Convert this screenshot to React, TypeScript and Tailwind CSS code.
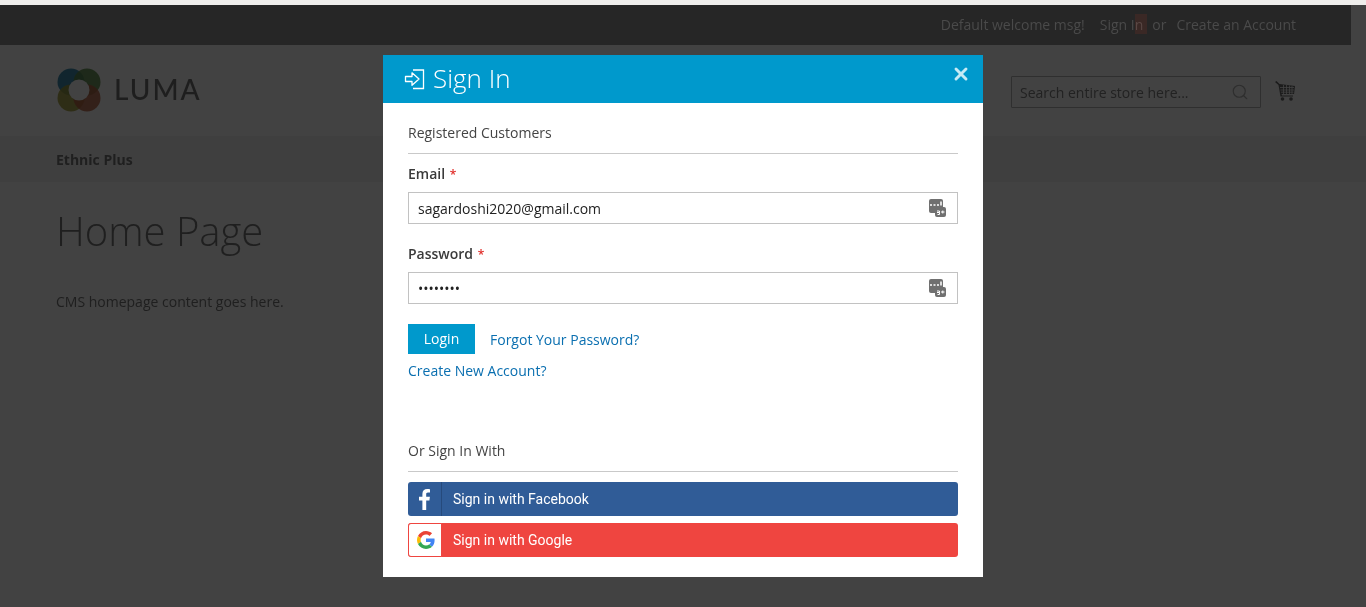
import { Search, X } from "lucide-react";

const LumaLogo = () => (
  <svg width="44" height="44" viewBox="0 0 44 44" className="ml-[1px] mr-[13px]">
    <g fillOpacity="0.85" style={{ mixBlendMode: "multiply" }}>
      <circle cx="14" cy="14" r="13.5" fill="#1f7ba3" />
      <circle cx="30" cy="14" r="13.5" fill="#5c8c46" />
      <circle cx="14" cy="30" r="13.5" fill="#a39d36" />
      <circle cx="30" cy="30" r="13.5" fill="#b86242" />
    </g>
    <circle cx="22" cy="22" r="10.5" fill="#424242" />
  </svg>
);

const CartIcon = () => (
  <svg width="20" height="20" viewBox="0 0 20 20" fill="#1c1c1c" className="mb-[2px]">
    <path d="M0 1 L1.500 0 L4.500 3 L20 5 L19 13 L6.500 13 L7 14.500 L18 14.500 L18 15.500 L5.500 15.500 L3.500 4 Z" />
    <g stroke="#424242" strokeWidth="0.8">
      <path d="M5 6.500 H19 M5.500 9 H19 M6 11.200 H18.500 M8.500 4 V13 M11.500 4 V13 M14.500 4.500 V13 M17 5 V13" />
    </g>
    <circle cx="7.500" cy="18" r="1.800" />
    <circle cx="16" cy="18" r="1.800" />
  </svg>
);

const SignInIcon = () => (
  <svg width="22" height="22" viewBox="0 0 22 22" fill="none" stroke="#ffffff" strokeWidth="1.3">
    <path d="M9 2 H19.5 V20.5 H9" />
    <path d="M1.5 8.5 H8 V4.8 L15 11 L8 17.2 V13.5 H1.5 Z" fill="#0099cc" strokeLinejoin="round" />
  </svg>
);

const KeyIcon = () => (
  <svg width="17" height="18" viewBox="0 0 17 18" className="absolute right-[11px] top-[6px]">
    <rect x="0" y="0" width="14" height="14" rx="2" fill="#707070" />
    <rect x="6" y="8" width="11" height="10" rx="2" fill="#707070" />
    <path d="M1 6 H3 M4.500 6 H6.500 M8 6 H10 M12 2.500 V6.500" stroke="#ffffff" strokeWidth="1.500" />
    <path d="M8 12 H10.500 V13.500 H8 M10.500 13.500 V15.500 H8.500 M12 13 H15.500 M13.800 11.500 V14.500" stroke="#ffffff" strokeWidth="1" fill="none" />
  </svg>
);

const GoogleIcon = () => (
  <svg width="18" height="18" viewBox="0 0 48 48">
    <path fill="#EA4335" d="M24 9.500c3.500 0 6.700 1.200 9.200 3.600l6.900-6.900C35.900 2.400 30.500 0 24 0 14.600 0 6.500 5.400 2.600 13.200l8 6.200C12.500 13.700 17.800 9.500 24 9.500z" />
    <path fill="#4285F4" d="M46.900 24.500c0-1.600-.1-3.100-.4-4.500H24v9h12.900c-.6 3-2.200 5.500-4.700 7.200l7.700 6c4.500-4.200 7-10.300 7-17.700z" />
    <path fill="#FBBC05" d="M10.500 28.600c-.5-1.400-.8-3-.8-4.600s.3-3.200.8-4.600l-8-6.200C.9 16.500 0 20.100 0 24s.9 7.500 2.600 10.800l7.900-6.200z" />
    <path fill="#34A853" d="M24 48c6.500 0 11.900-2.100 15.900-5.800l-7.700-6c-2.200 1.400-4.900 2.300-8.200 2.300-6.200 0-11.500-4.200-13.400-9.900l-8 6.200C6.500 42.600 14.600 48 24 48z" />
  </svg>
);

const Field = ({ label, value, mt }: { label: string; value: string; mt: string }) => (
  <div className={mt}>
    <div className="h-[20px] text-[14px] leading-[20px] font-semibold text-[#3a3a3a]">
      {label} <span className="ml-[1px] text-[12px] leading-[12px] text-[#e02b27]">*</span>
    </div>
    <div className="relative mt-[8px] h-[32px] border border-[#c2c2c2] pl-[9px] text-[14px] leading-[31px] text-[#222]">
      {value}
      <KeyIcon />
    </div>
  </div>
);

export default function App() {
  return (
    <div className="relative h-[607px] overflow-hidden bg-[#424242] font-['Open_Sans',sans-serif]">
      <div className="h-[5px] bg-[#efeeec]" />

      <div className="flex h-[40px] w-[1351px] items-center justify-end bg-[#262626] pb-[2px] pr-[55px] text-[14px] text-[#4a4a4a]">
        <span>Default welcome msg!</span>
        <span className="relative ml-[15px]">
          Sign In
          <span className="absolute left-[35px] top-[0px] h-[20px] w-[12px] bg-[#e83a1e]/10" />
        </span>
        <span className="ml-[9px]">or</span>
        <span className="ml-[10px]">Create an Account</span>
      </div>

      <div className="flex h-[91px] items-start px-[56px] pt-[23px]">
        <LumaLogo />
        <span className="mt-[3px] text-[28px] leading-[36px] font-medium tracking-[2px] text-[#1e1e1e] font-['Lato',sans-serif]">LUMA</span>
        <div className="ml-auto flex items-center pt-[8px]">
          <div className="relative h-[32px] w-[250px] rounded-[1px] border border-[#2f2f2f] pl-[8px] text-[14px] leading-[31px] text-[#222]">
            Search entire store here...
            <Search className="absolute right-[11px] top-[6px] text-[#2e2e2e]" size={18} strokeWidth={1.5} />
          </div>
          <div className="ml-[14px] mr-[15px]">
            <CartIcon />
          </div>
        </div>
      </div>

      <div className="h-[46px] bg-[#3f3f3f] px-[56px] text-[14px] leading-[47px] font-bold text-[#1f1f1f]">Ethnic Plus</div>

      <main className="px-[56px]">
        <h1 className="mt-[24px] text-[40px] leading-[50px] font-light text-[#1f1f1f]">Home Page</h1>
        <p className="mt-[36px] text-[14px] leading-[20px] text-[#1f1f1f]">CMS homepage content goes here.</p>
      </main>

      <div className="absolute left-[383px] top-[55px] h-[522px] w-[600px] bg-white">
        <div className="flex h-[48px] items-center bg-[#0099cc] pl-[21px] pr-[12px] text-white">
          <SignInIcon />
          <span className="mb-[2px] ml-[7px] text-[26px] leading-[48px] font-light">Sign In</span>
          <X className="ml-auto mb-[10px] text-[#c6ebf5]" size={20} strokeWidth={3.5} />
        </div>

        <div className="px-[25px]">
          <div className="mt-[20px] border-b border-[#c9c9c9] pb-[10px] text-[14px] leading-[20px] text-[#444]">Registered Customers</div>
          <Field label="Email" value="sagardoshi2020@gmail.com" mt="mt-[10px]" />
          <Field label="Password" value="••••••••" mt="mt-[20px]" />

          <div className="mt-[20px] flex items-center">
            <span className="h-[30px] w-[67px] bg-[#0099cc] text-center text-[14px] leading-[30px] font-medium text-white">Login</span>
            <span className="ml-[15px] text-[14px] text-[#0a6fb0]">Forgot Your Password?</span>
          </div>
          <div className="mt-[7px] text-[14px] leading-[20px] text-[#0a6fb0]">Create New Account?</div>

          <div className="mt-[60px] border-b border-[#c9c9c9] pb-[10px] text-[14px] leading-[20px] text-[#444]">Or Sign In With</div>

          <div className="mt-[10px] flex h-[34px] rounded-[3px] bg-[#305c97] font-['Roboto',sans-serif] text-[14px] leading-[34px] text-white">
            <span className="flex w-[34px] items-center justify-center border-r border-[#264a7c]">
              <svg width="11" height="21" viewBox="0 0 11 21" fill="#ffffff">
                <path d="M7.200 21 V11.500 H10.400 L10.900 7.800 H7.200 V5.400 C7.200 4.300 7.500 3.600 9 3.600 H11 V0.200 C10.600 0.100 9.500 0 8.200 0 C5.300 0 3.400 1.700 3.400 4.900 V7.800 H0 V11.500 H3.400 V21 Z" />
              </svg>
            </span>
            <span className="ml-[11px]">Sign in with Facebook</span>
          </div>

          <div className="mt-[7px] flex h-[34px] rounded-[3px] bg-[#ef4540] font-['Roboto',sans-serif] text-[14px] leading-[34px] text-white">
            <span className="flex w-[34px] items-center justify-center rounded-l-[3px] border border-[#ef4540] bg-white pl-[1px]">
              <GoogleIcon />
            </span>
            <span className="ml-[11px]">Sign in with Google</span>
          </div>
        </div>
      </div>
    </div>
  );
}
